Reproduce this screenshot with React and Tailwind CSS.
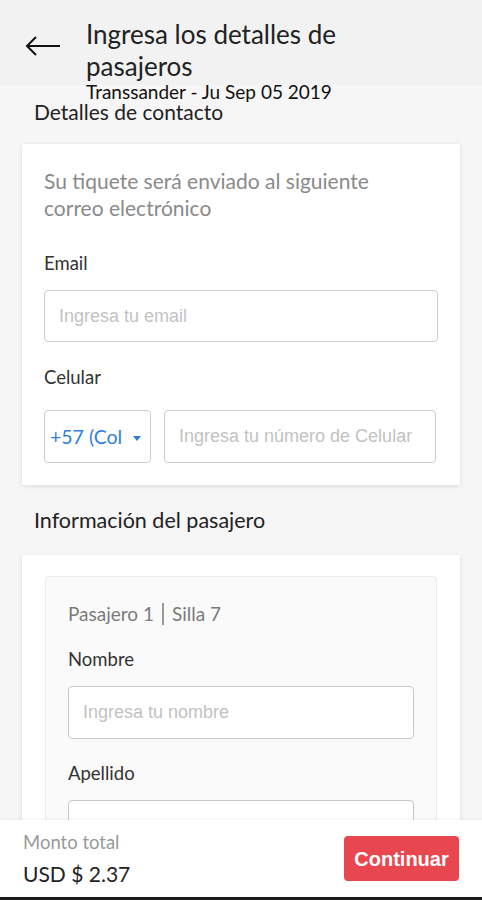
export default function App() {
  const lato = { fontFamily: "Lato, 'Open Sans', sans-serif" };
  const sans = { fontFamily: "'Liberation Sans', Arial, sans-serif" };
  return (
    <div className="flex h-[900px] w-[482px] flex-col overflow-hidden bg-[#f6f6f6] text-[#222]" style={lato}>
      <header className="relative z-10 flex h-[85px] shrink-0 bg-[#f2f2f2]">
        <div className="flex w-[86px] shrink-0 justify-start pl-[25px] pt-[36px]">
          <svg width="36" height="20" viewBox="0 0 36 20" fill="none" stroke="#111" strokeWidth="2">
            <path d="M35 10H2" />
            <path d="M11 1L2 10l9 9" />
          </svg>
        </div>
        <div className="pt-[18px]">
          <h1 className="text-[26px] leading-[32px] font-normal">Ingresa los detalles de<br />pasajeros</h1>
          <p className="text-[19px] leading-[19px] text-[#111]">Transsander - Ju Sep 05 2019</p>
        </div>
      </header>

      <main className="flex-1 overflow-hidden px-[22px] pt-[17px]">
        <h2 className="pl-[12px] text-[21px] leading-[20px]">Detalles de contacto</h2>
        <section className="mt-[22px] bg-white px-[22px] pt-[23px] pb-[22px] shadow-[0_1px_4px_rgba(0,0,0,0.12)]">
          <p className="pr-[40px] text-[21px] leading-[27px] text-[#8a8a8a]">Su tiquete será enviado al siguiente correo electrónico</p>
          <label className="mt-[31px] block text-[18.5px] leading-[22px] text-[#333]">Email</label>
          <input
            className="mt-[16px] block h-[52px] w-full rounded-[4px] border border-[#cfcfcf] px-[14px] text-[18px] outline-none placeholder:text-[#c2c2c2]"
            style={sans}
            placeholder="Ingresa tu email"
          />
          <label className="mt-[24px] block text-[18.5px] leading-[22px] text-[#333]">Celular</label>
          <div className="mt-[22px] flex gap-[13px] pr-[2px]">
            <div className="flex h-[53px] w-[107px] shrink-0 items-center justify-between rounded-[4px] border border-[#cfcfcf] pl-[5px] pr-[9px]">
              <span className="text-[19.5px] text-[#2f7fd8]">+57 (Col</span>
              <svg width="8" height="5" viewBox="0 0 8 5" className="mt-[4px]">
                <path d="M0 0h8L4 5z" fill="#2f7fd8" />
              </svg>
            </div>
            <input
              className="block h-[53px] min-w-0 flex-1 rounded-[4px] border border-[#cfcfcf] px-[14px] text-[18px] outline-none placeholder:text-[#c2c2c2]"
              style={sans}
              placeholder="Ingresa tu número de Celular"
            />
          </div>
        </section>

        <h2 className="mt-[23px] pl-[12px] text-[21.5px] leading-[24px]">Información del pasajero</h2>
        <section className="mt-[23px] bg-white px-[23px] pt-[21px] pb-[22px] shadow-[0_1px_4px_rgba(0,0,0,0.12)]">
          <div className="rounded-[3px] border border-[#ececec] bg-[#fafafa] px-[22px] pt-[26px] pb-[24px]">
            <p className="flex items-center text-[19px] leading-[22px] text-[#7a7a7a]">
              Pasajero 1
              <span className="mx-[8px] inline-block h-[22px] w-[2px] bg-[#9a9a9a]" />
              Silla 7
            </p>
            <label className="mt-[23px] block text-[18.5px] leading-[22px] text-[#333]">Nombre</label>
            <input
              className="mt-[16px] block h-[53px] w-full rounded-[4px] border border-[#c8c8c8] bg-white px-[14px] text-[18px] outline-none placeholder:text-[#c2c2c2]"
              style={sans}
              placeholder="Ingresa tu nombre"
            />
            <label className="mt-[23px] block text-[18.5px] leading-[22px] text-[#333]">Apellido</label>
            <input
              className="mt-[16px] block h-[53px] w-full rounded-[4px] border border-[#c8c8c8] bg-white px-[14px] text-[18px] outline-none"
              style={sans}
            />
          </div>
        </section>
      </main>

      <footer className="flex h-[77px] shrink-0 items-center justify-between bg-white pl-[23px] pr-[23px] shadow-[0_-1px_3px_rgba(0,0,0,0.06)]">
        <div>
          <p className="text-[18.5px] leading-[22px] text-[#999]">Monto total</p>
          <p className="mt-[9px] text-[21px] leading-[24px] text-[#222]">USD $ 2.37</p>
        </div>
        <button className="h-[45px] w-[115px] rounded-[4px] bg-[#e8474f] text-[20px] font-bold text-white" style={sans}>
          Continuar
        </button>
      </footer>
      <div className="h-[3px] shrink-0 bg-[#1a1a1a]" />
    </div>
  );
}
